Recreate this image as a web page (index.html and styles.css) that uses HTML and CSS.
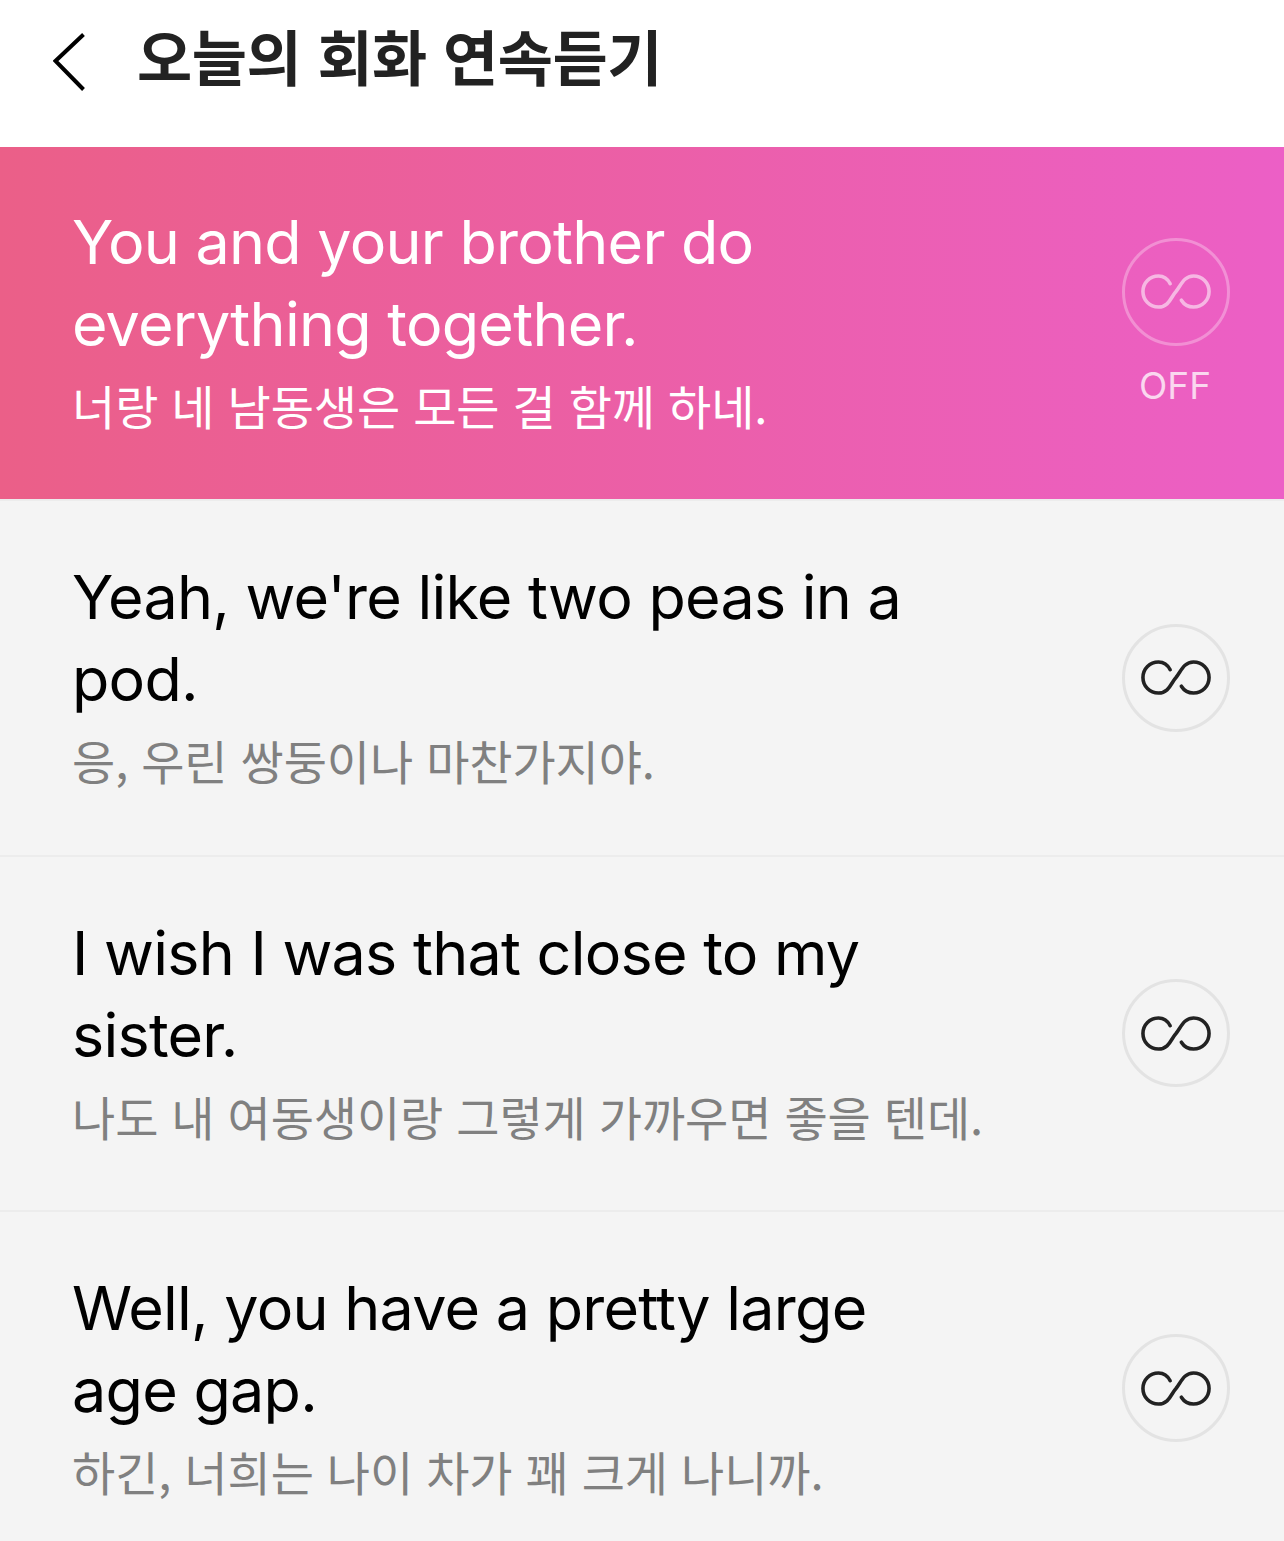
FILE: index.html
```html
<!DOCTYPE html>
<html lang="ko">
<head>
    <meta charset="utf-8">
    <title>오늘의 회화 연속듣기</title>
    <link rel="stylesheet" href="styles.css">
</head>
<body>
    <svg class="defs" width="0" height="0">
        <symbol id="infinity" viewBox="-36 -19 72 38">
            <path d="M-6 -8 C-8.5 -13 -13 -16 -18 -16 C-27 -16 -34 -9 -34 0 C-34 9 -27 16 -18 16 C-7 16 -5 5 0 0 C5 -6 8 -16 18 -16 C27 -16 34 -9 34 0 C34 9 27 16 18 16 C13 16 8 13 5.5 9"/>
        </symbol>
    </svg>
    <header class="topbar">
        <svg class="back" width="32" height="58" viewBox="0 0 32 58">
            <path d="M30.5 1.5 L2.5 28 L30.5 56.5"/>
        </svg>
        <h1 class="title">오늘의 회화 연속듣기</h1>
    </header>
    <main>
        <section class="row row-active">
            <div class="text">
                <p class="en">You and your brother do<br>everything together.</p>
                <p class="ko">너랑 네 남동생은 모든 걸 함께 하네.</p>
            </div>
            <div class="loop">
                <div class="loop-btn"><svg class="inf"><use href="#infinity"/></svg></div>
                <span class="loop-label">OFF</span>
            </div>
        </section>
        <section class="row row-first">
            <div class="text">
                <p class="en">Yeah, we're like two peas in a<br>pod.</p>
                <p class="ko">응, 우린 쌍둥이나 마찬가지야.</p>
            </div>
            <div class="loop">
                <div class="loop-btn"><svg class="inf"><use href="#infinity"/></svg></div>
            </div>
        </section>
        <section class="row">
            <div class="text">
                <p class="en">I wish I was that close to my<br>sister.</p>
                <p class="ko">나도 내 여동생이랑 그렇게 가까우면 좋을 텐데.</p>
            </div>
            <div class="loop">
                <div class="loop-btn"><svg class="inf"><use href="#infinity"/></svg></div>
            </div>
        </section>
        <section class="row">
            <div class="text">
                <p class="en">Well, you have a pretty large<br>age gap.</p>
                <p class="ko">하긴, 너희는 나이 차가 꽤 크게 나니까.</p>
            </div>
            <div class="loop">
                <div class="loop-btn"><svg class="inf"><use href="#infinity"/></svg></div>
            </div>
        </section>
    </main>
</body>
</html>
```

FILE: styles.css
```css
html, body {
    margin: 0;
    padding: 0;
}
body {
    width: 1284px;
    height: 1541px;
    overflow: hidden;
    background: #f4f4f4;
    font-family: "Inter", "Noto Sans CJK KR", sans-serif;
}
.defs {
    position: absolute;
}
.topbar {
    height: 147px;
    background: #fff;
    display: flex;
    align-items: center;
    padding: 0 0 37px 53px;
    box-sizing: border-box;
}
.back {
    fill: none;
    stroke: #000;
    stroke-width: 4;
    margin-right: 52px;
    margin-top: 14px;
}
.title {
    margin: 0;
    font-family: "Noto Sans CJK KR", sans-serif;
    font-size: 60px;
    font-weight: 700;
    letter-spacing: -0.5px;
    color: #222;
    line-height: 1;
}
.row {
    height: 355px;
    box-sizing: border-box;
    display: flex;
    align-items: center;
    justify-content: space-between;
    padding: 0 54px 0 72px;
    border-top: 2px solid #ececec;
}
.row-first {
    height: 356px;
    border-top-color: #ececec;
}
.row-active {
    height: 352px;
    border-top: 0;
    background: linear-gradient(90deg, #eb5f88, #ec5fc6);
    color: #fff;
}
.en {
    margin: 0;
    font-size: 61px;
    line-height: 82px;
    letter-spacing: -0.75px;
    color: #000;
}
.ko {
    margin: 0;
    font-family: "Noto Sans CJK KR", sans-serif;
    font-size: 47px;
    font-weight: 400;
    line-height: 80px;
    letter-spacing: -0.1px;
    color: #808080;
}
.row-active .en, .row-active .ko {
    color: #fff;
}
.loop {
    width: 108px;
    margin-bottom: 1px;
    display: flex;
    flex-direction: column;
}
.loop-btn {
    width: 108px;
    height: 108px;
    box-sizing: border-box;
    border: 3px solid #e3e3e3;
    border-radius: 50%;
    display: flex;
    align-items: center;
    justify-content: center;
}
.inf {
    width: 70px;
    height: 37px;
    fill: none;
    stroke: #222;
    stroke-width: 3.7;
    stroke-linecap: round;
}
.row-active .loop-btn {
    border-color: rgba(255, 255, 255, 0.3);
}
.row-active .inf {
    stroke: rgba(255, 255, 255, 0.55);
}
.loop-label {
    margin-top: 18px;
    padding-right: 2px;
    text-align: center;
    font-size: 37px;
    line-height: 44px;
    color: rgba(255, 255, 255, 0.75);
}
```
